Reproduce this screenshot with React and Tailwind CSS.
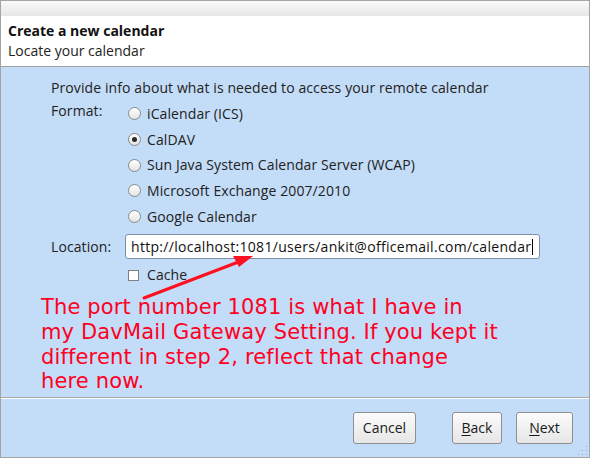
import React from "react";

function Radio({ checked }) {
  return (
    <span className="relative inline-flex w-[13px] h-[13px] rounded-full border border-[#8a8a8a] bg-gradient-to-b from-[#ffffff] to-[#e4e4e4] items-center justify-center shrink-0">
      {checked && <span className="w-[5px] h-[5px] rounded-full bg-[#2a2a2a]" />}
    </span>
  );
}

function Btn({ children, w }) {
  return (
    <div
      className={`h-[32px] ${w} rounded-[3px] border border-[#8f8f8f] bg-gradient-to-b from-[#fbfbfb] to-[#e6e6e6] flex items-center justify-center text-[14px] text-[#1a1a1a] shadow-[inset_0_1px_0_#ffffff]`}
    >
      {children}
    </div>
  );
}

export default function App() {
  const formats = [
    ["iCalendar (ICS)", false],
    ["CalDAV", true],
    ["Sun Java System Calendar Server (WCAP)", false],
    ["Microsoft Exchange 2007/2010", false],
    ["Google Calendar", false],
  ];
  return (
    <div
      className="w-[590px] h-[458px] border border-[#a4a4a4] bg-[#c3dcf7] flex flex-col overflow-hidden text-[#222]"
      style={{ fontFamily: '"Open Sans", "Noto Sans", sans-serif' }}
    >
      <div className="h-[15px] bg-gradient-to-b from-[#fafafa] to-[#e6e6e6]" />
      <div className="h-[51px] bg-white border-b border-[#a0a0a0] px-[7px] pt-[5px] leading-[19px] text-[14px]">
        <div className="font-bold text-[#111]">Create a new calendar</div>
        <div className="text-[#222] pt-[1px]">Locate your calendar</div>
      </div>
      <div className="relative flex-1 pl-[50px] pt-[11px] text-[14px] leading-[20px] tracking-[0.1px]">
        <div>Provide info about what is needed to access your remote calendar</div>
        <div className="flex mt-[3px]">
          <div className="w-[75px]">Format:</div>
          <div className="flex flex-col pl-[2px]">
            {formats.map(([t, c]) => (
              <div key={t} className="h-[25.7px] flex items-center gap-[6px]">
                <Radio checked={c} />
                <span>{t}</span>
              </div>
            ))}
          </div>
        </div>
        <div className="flex items-center mt-[5px]">
          <div className="w-[74px]">Location:</div>
          <div className="w-[415px] h-[25px] bg-white border border-[#7d8fa8] rounded-[3px] flex items-center pl-[5px] text-[14px] text-[#111] tracking-[0.3px]">
            <span>http://localhost:1081/users/ankit@officemail.com/calendar</span>
            <span className="w-[1px] h-[16px] bg-black ml-[1px]" />
          </div>
        </div>
        <div className="flex items-center gap-[8px] ml-[77px] mt-[6px] h-[20px]">
          <span className="w-[11px] h-[11px] border border-[#7f7f7f] bg-white" />
          <span>Cache</span>
        </div>
        <div
          className="text-[#ff0022] text-[21px] leading-[24.6px] mt-[10px] -ml-[10px] tracking-[0.15px]"
          style={{ fontFamily: '"DejaVu Sans", sans-serif' }}
        >
          The port number 1081 is what I have in
          <br />
          my DavMail Gateway Setting. If you kept it
          <br />
          different in step 2, reflect that change
          <br />
          here now.
        </div>
        <svg className="absolute left-0 top-0" width="590" height="330" viewBox="0 67 590 330">
          <line x1="143" y1="298" x2="240" y2="261" stroke="#ff1020" strokeWidth="3" strokeLinecap="round" />
          <polygon points="252,256 232,256 238,267" fill="#ff1020" />
        </svg>
      </div>
      <div className="h-[60px] border-t border-[#a8a8a8] shadow-[inset_0_1px_0_#ffffff] flex items-center justify-end pr-[16px] relative">
        <div className="flex items-center">
          <Btn w="w-[63px]">Cancel</Btn>
          <div className="w-[36px]" />
          <Btn w="w-[50px]"><span><span className="underline underline-offset-2">B</span>ack</span></Btn>
          <div className="w-[14px]" />
          <Btn w="w-[57px]"><span><span className="underline underline-offset-2">N</span>ext</span></Btn>
        </div>
        <svg className="absolute right-[1px] bottom-[1px]" width="12" height="12">
          {[[10,2],[10,6],[6,6],[10,10],[6,10],[2,10]].map(([x,y],i)=>(
            <rect key={i} x={x} y={y} width="1" height="1" fill="#9aa8b8" />
          ))}
        </svg>
      </div>
    </div>
  );
}
